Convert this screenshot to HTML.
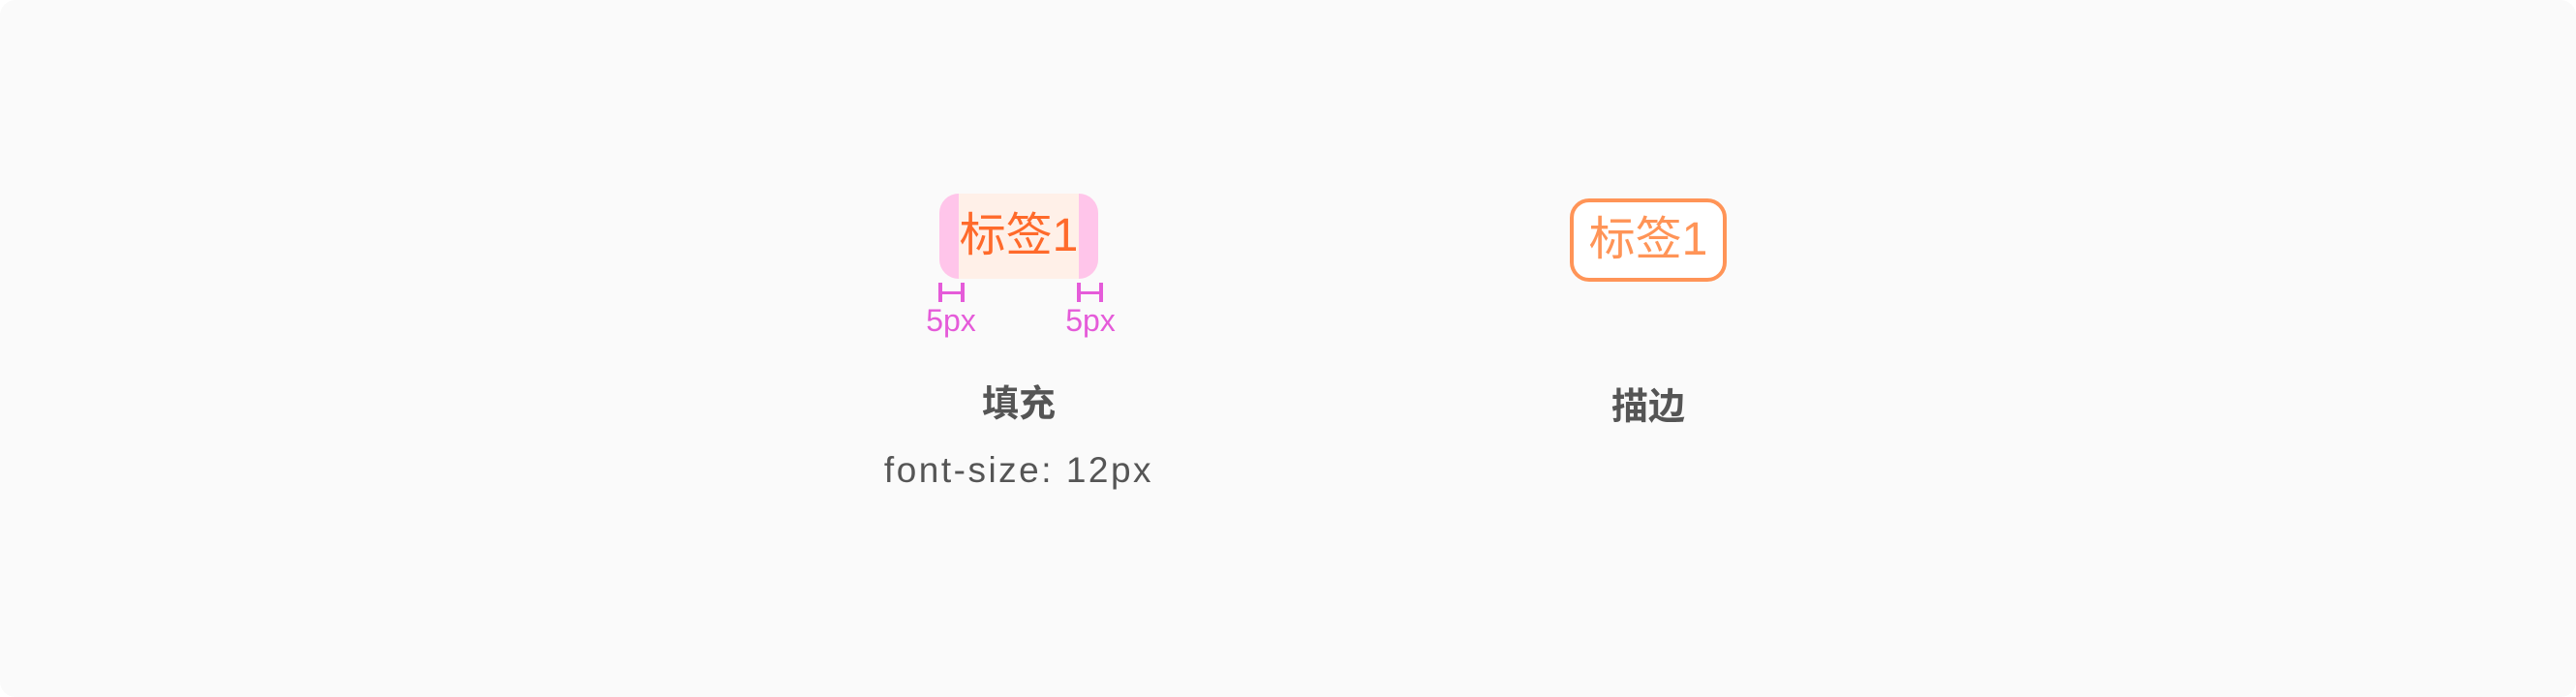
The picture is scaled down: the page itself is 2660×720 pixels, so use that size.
<!DOCTYPE html>
<html><head><meta charset="utf-8"><style>
html,body{margin:0;padding:0;background:#fff;}
.page{position:relative;width:2660px;height:720px;background:#fafafa;border-radius:16px;overflow:hidden;font-family:"Liberation Sans","Noto Sans CJK SC",sans-serif;}
.abs{position:absolute;}
.fill{left:970px;top:200px;width:164px;height:88px;border-radius:20px;background:#fff0e8;overflow:hidden;}
.fill .l{position:absolute;left:0;top:0;width:20px;height:88px;background:#ffc5ea;}
.fill .r{position:absolute;right:0;top:0;width:20px;height:88px;background:#ffc5ea;}
.tagtxt{position:absolute;left:0;width:100%;text-align:center;font-size:48px;line-height:88px;top:0;}
.stroke{left:1621px;top:205px;width:154px;height:78px;border:4px solid #ff9457;border-radius:20px;background:#fff;}
.h{position:absolute;width:27px;height:20px;}
.h i{position:absolute;background:#e55bd9;}
.lbl{position:absolute;color:#e55bd9;font-size:32px;width:80px;text-align:center;line-height:34px;}
.title{position:absolute;width:200px;text-align:center;font-weight:bold;font-size:38px;color:#555;line-height:40px;}
</style></head><body><div class="page">
<div class="abs fill"><div class="l"></div><div class="r"></div><div class="tagtxt" style="color:#ff6a2b">标签1</div></div>
<div class="h" style="left:969px;top:292px"><i style="left:0;top:0;width:4px;height:20px"></i><i style="right:0;top:0;width:4px;height:20px"></i><i style="left:0;top:9px;width:27px;height:3px"></i></div>
<div class="h" style="left:1112px;top:292px"><i style="left:0;top:0;width:4px;height:20px"></i><i style="right:0;top:0;width:4px;height:20px"></i><i style="left:0;top:9px;width:27px;height:3px"></i></div>
<div class="lbl" style="left:942px;top:314px">5px</div>
<div class="lbl" style="left:1086px;top:314px">5px</div>
<div class="title" style="left:952px;top:398px">填充</div>
<div class="abs" style="left:852px;top:466px;width:400px;text-align:center;font-size:37px;letter-spacing:2.5px;color:#555;line-height:40px">font-size: 12px</div>
<div class="abs stroke"><div class="tagtxt" style="color:#ff9457;line-height:78px">标签1</div></div>
<div class="title" style="left:1602px;top:401px">描边</div>
</div></body></html>
